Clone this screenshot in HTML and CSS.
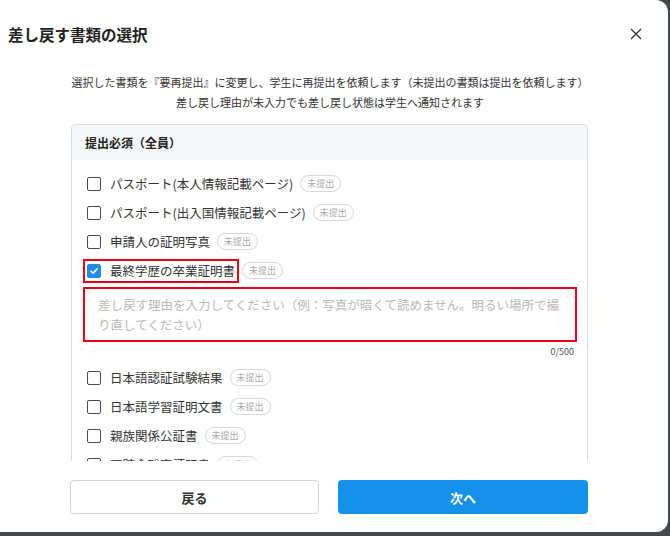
FILE: index.html
```html
<!DOCTYPE html>
<html lang="ja">
<head>
<meta charset="utf-8">
<title>差し戻す書類の選択</title>
<link rel="stylesheet" href="styles.css">
</head>
<body>
<div class="modal">
  <header class="modal-head">
    <h1 class="title">差し戻す書類の選択</h1>
    <button class="close" aria-label="閉じる">
      <svg width="12" height="12" viewBox="0 0 12 12"><path d="M1 1L11 11M11 1L1 11" stroke="#333" stroke-width="1.4" fill="none"/></svg>
    </button>
  </header>
  <div class="intro">
    <p>選択した書類を『要再提出』に変更し、学生に再提出を依頼します（未提出の書類は提出を依頼します）</p>
    <p>差し戻し理由が未入力でも差し戻し状態は学生へ通知されます</p>
  </div>
  <div class="scroll">
    <section class="panel">
      <div class="panel-head">提出必須（全員）</div>
      <div class="list">
        <div class="row"><label class="item"><span class="cb"></span><span class="name">パスポート(本人情報記載ページ)</span></label><span class="badge">未提出</span></div>
        <div class="row"><label class="item"><span class="cb"></span><span class="name">パスポート(出入国情報記載ページ)</span></label><span class="badge">未提出</span></div>
        <div class="row"><label class="item"><span class="cb"></span><span class="name">申請人の証明写真</span></label><span class="badge">未提出</span></div>
        <div class="row"><label class="item item-error"><span class="cb cb-on"><svg width="10" height="10" viewBox="0 0 10 10"><path d="M2 5.2L4.2 7.2L8.2 2.8" stroke="#fff" stroke-width="1.6" fill="none" stroke-linecap="round" stroke-linejoin="round"/></svg></span><span class="name">最終学歴の卒業証明書</span></label><span class="badge">未提出</span></div>
        <div class="reason">差し戻す理由を入力してください（例：写真が暗くて読めません。明るい場所で撮<br>り直してください）</div>
        <div class="count">0/500</div>
        <div class="row row-after"><label class="item"><span class="cb"></span><span class="name">日本語認証試験結果</span></label><span class="badge">未提出</span></div>
        <div class="row"><label class="item"><span class="cb"></span><span class="name">日本語学習証明文書</span></label><span class="badge">未提出</span></div>
        <div class="row"><label class="item"><span class="cb"></span><span class="name">親族関係公証書</span></label><span class="badge">未提出</span></div>
        <div class="row"><label class="item"><span class="cb"></span><span class="name">預貯金残高証明書</span></label><span class="badge">未提出</span></div>
      </div>
    </section>
  </div>
  <footer class="actions">
    <button class="btn btn-back">戻る</button>
    <button class="btn btn-next">次へ</button>
  </footer>
</div>
</body>
</html>
```
FILE: styles.css
```css
* { box-sizing: border-box; }
html, body { margin: 0; padding: 0; }
body {
  background: #46494c;
  font-family: "Noto Sans CJK JP", "Noto Sans", sans-serif;
  color: #333;
  width: 670px;
  height: 536px;
  overflow: hidden;
}
.modal {
  width: 668px;
  height: 532px;
  background: #fff;
  border-radius: 0 12px 12px 0;
  display: flex;
  flex-direction: column;
}
.modal-head {
  display: flex;
  align-items: center;
  justify-content: space-between;
  padding: 24px 22px 0 8px;
  height: 44px;
}
.title {
  margin: 0;
  font-size: 15.5px;
  line-height: 20px;
  font-weight: 700;
  color: #222;
}
.close {
  width: 20px;
  height: 20px;
  border: 0;
  background: none;
  padding: 0;
  display: flex;
  align-items: center;
  justify-content: center;
}
.intro {
  margin-top: 28px;
  padding-right: 8px;
  text-align: center;
  font-size: 11px;
  line-height: 20px;
  color: #333;
}
.intro p { margin: 0; }
.scroll {
  margin: 12px 0 0 71px;
  width: 517px;
  height: 337px;
  overflow: hidden;
}
.panel {
  border: 1px solid #dedede;
  border-radius: 4px;
}
.panel-head {
  height: 35px;
  line-height: 35px;
  padding-left: 13px;
  background: #f5f6f7;
  font-size: 12px;
  font-weight: 700;
  color: #222;
  border-radius: 4px 4px 0 0;
}
.list {
  padding: 9px 10px 20px 11px;
}
.row {
  height: 29px;
  display: flex;
  align-items: center;
  gap: 3px;
}
.row-after { margin-top: 5px; }
.item {
  display: flex;
  align-items: center;
  gap: 9px;
  height: 24px;
  padding: 0 2px;
  border: 2px solid transparent;
}
.item-error { border-color: #e8001c; }
.cb {
  width: 14px;
  height: 14px;
  border: 1.5px solid #4a4a4a;
  border-radius: 2px;
  display: flex;
  align-items: center;
  justify-content: center;
}
.cb-on {
  background: #1b8de6;
  border-color: #1b8de6;
}
.name {
  font-size: 12.5px;
  color: #333;
  white-space: nowrap;
}
.badge {
  height: 17px;
  line-height: 15px;
  padding: 0 6px;
  border: 1px solid #d6d6d6;
  border-radius: 9px;
  font-size: 9px;
  color: #a9a9a9;
}
.reason {
  margin-top: 2px;
  height: 55px;
  border: 2px solid #e8001c;
  padding: 6px 8px 0 13px;
  font-size: 12.5px;
  line-height: 20px;
  color: #b9b9b9;
  white-space: nowrap;
}
.count {
  margin-top: 4px;
  text-align: right;
  padding-right: 3px;
  font-size: 9px;
  line-height: 12px;
  color: #555;
}
.actions {
  margin-top: 19px;
  padding-left: 70px;
  display: flex;
  gap: 19px;
}
.btn {
  height: 34px;
  border-radius: 4px;
  font-family: inherit;
  font-size: 13px;
  font-weight: 700;
}
.btn-back {
  width: 249px;
  background: #fff;
  border: 1px solid #d3d3d3;
  color: #333;
}
.btn-next {
  width: 250px;
  background: #1591ea;
  border: 0;
  color: #fff;
}
```
